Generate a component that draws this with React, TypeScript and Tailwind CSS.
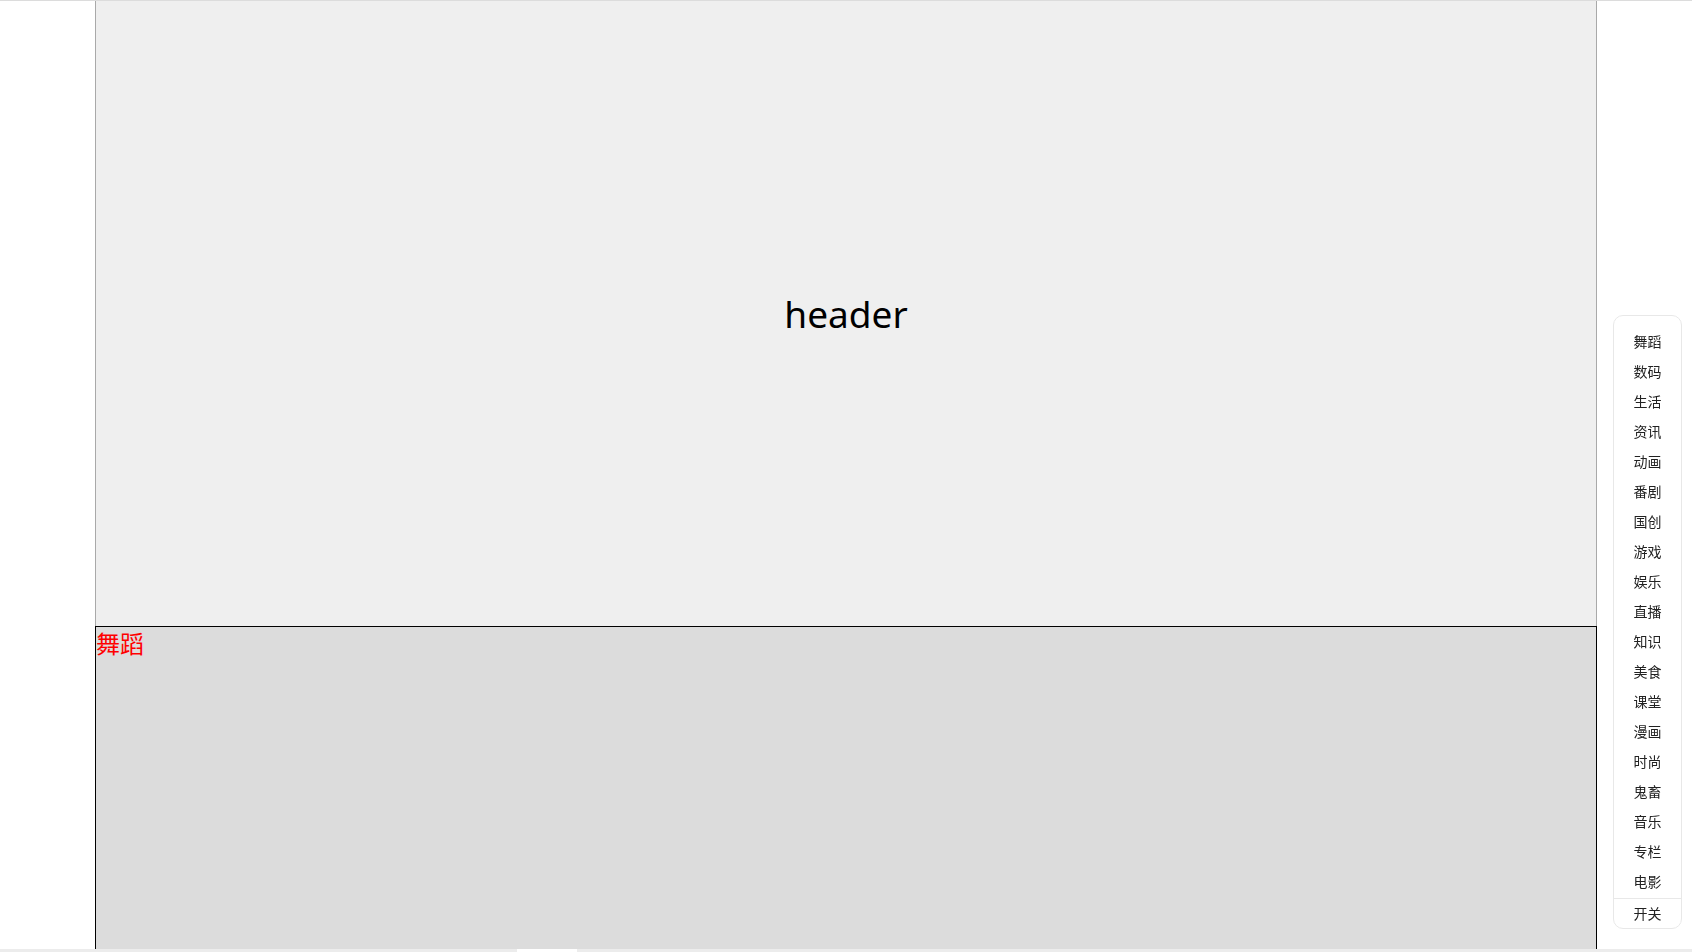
import React from 'react';

const categories = [
  '舞蹈', '数码', '生活', '资讯', '动画', '番剧', '国创', '游戏', '娱乐', '直播',
  '知识', '美食', '课堂', '漫画', '时尚', '鬼畜', '音乐', '专栏', '电影',
];

const font = { fontFamily: '"Noto Sans", "Noto Sans CJK SC", sans-serif' };

export default function App() {
  return (
    <div className="h-screen overflow-hidden bg-white border-t border-[#dcdcdc]" style={font}>
      <div className="w-[1502px] mx-auto">
        {/* header block */}
        <div className="h-[625px] bg-[#efefef] border-x border-[#a9a9a9] flex items-center justify-center">
          <span className="text-[37px] text-black leading-none">header</span>
        </div>

        {/* first section */}
        <div className="h-[600px] bg-[#dcdcdc] border border-black">
          <h2 className="text-[24px] leading-[34px] text-[#ff0000]">舞蹈</h2>
        </div>
      </div>

      {/* side nav */}
      <div className="fixed right-[10px] top-[315px] w-[69px] bg-white border border-[#e8e8e8] rounded-[10px] pt-[10px] overflow-hidden">
        <ul className="flex flex-col">
          {categories.map((c) => (
            <li key={c} className="h-[30px] flex items-center justify-center text-[14px] text-[#222]">
              {c}
            </li>
          ))}
        </ul>
        <div className="mt-[2px] h-[30px] border-t border-[#e8e8e8] flex items-center justify-center text-[14px] text-[#222]">
          开关
        </div>
      </div>

      {/* bottom scroll strip */}
      <div className="fixed left-0 right-0 bottom-0 h-[3px] bg-[#ececec]">
        <div className="ml-[517px] w-[60px] h-full bg-white" />
      </div>
    </div>
  );
}
